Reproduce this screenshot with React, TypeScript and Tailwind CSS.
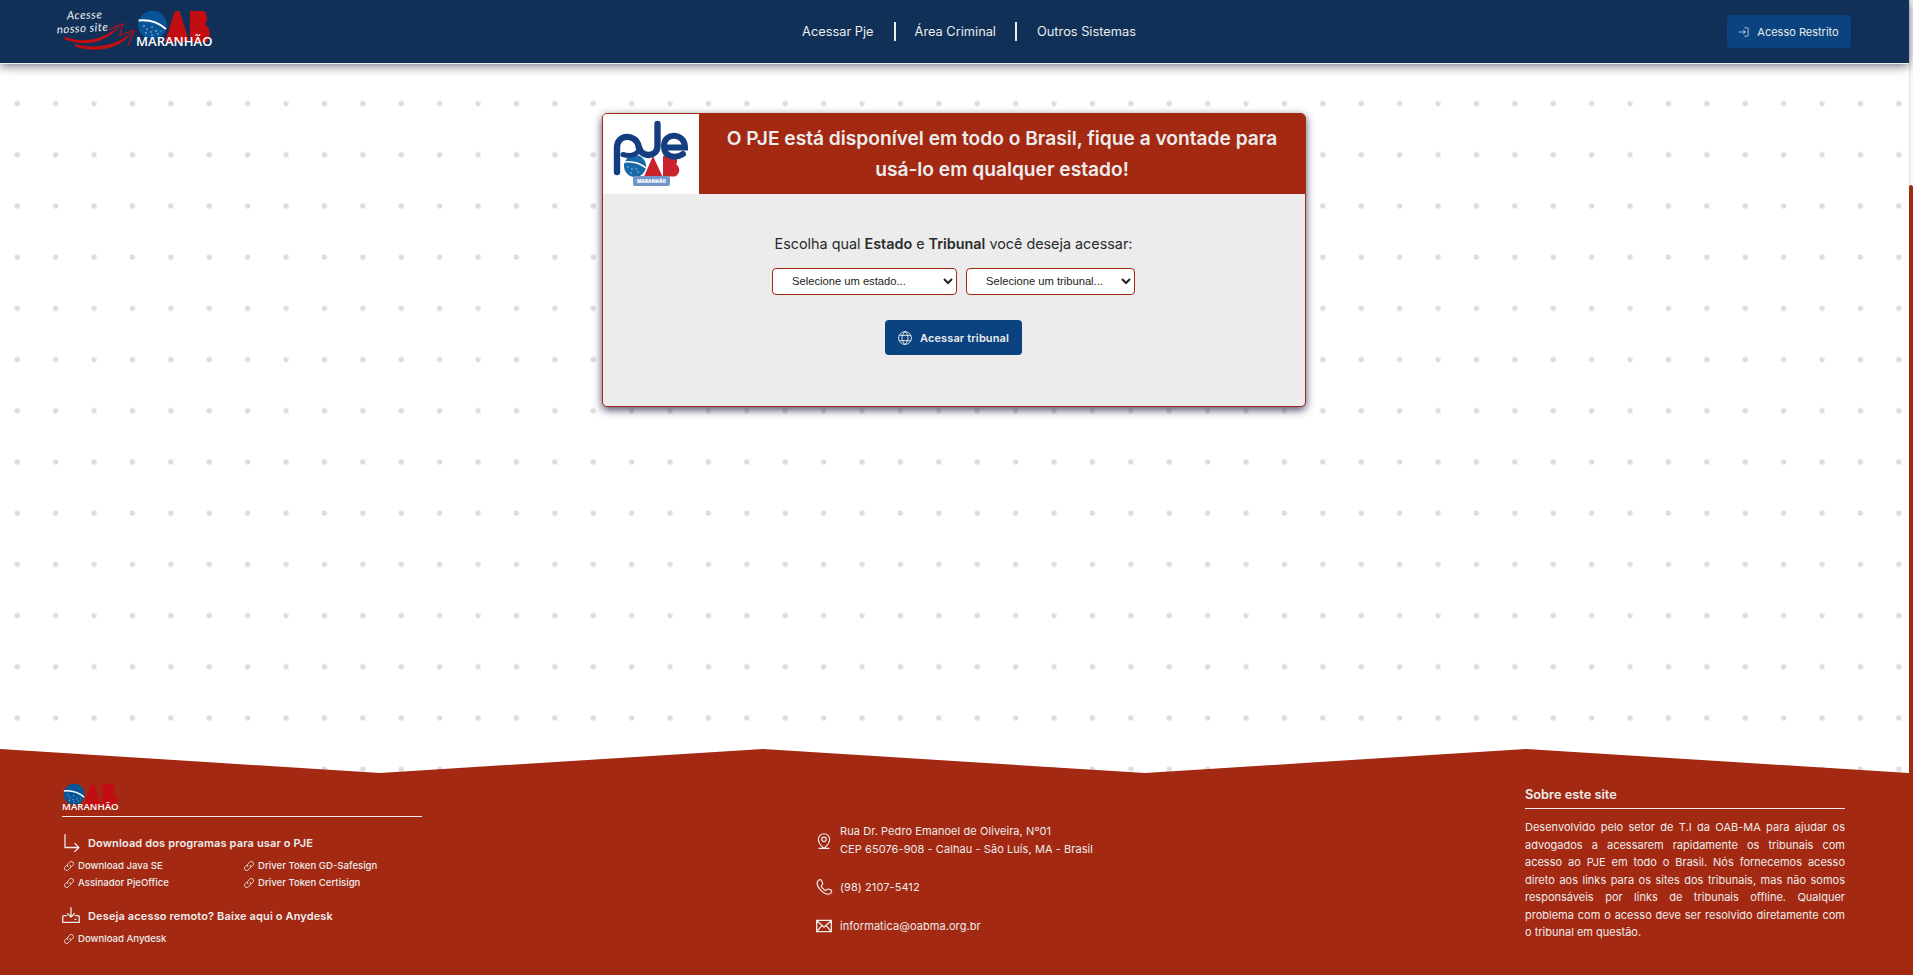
import type { ReactNode } from "react";
import { PiMapPinLine } from "react-icons/pi";

function OabMark() {
  return (
    <>
      <circle cx="14.500" cy="14" r="14.3" fill="#075497" />
      <path d="M.5 9.500C10 8.500 20 11 28 18" fill="none" stroke="#fff" strokeWidth="2" />
      <g fill="#c9d9ea">
        <circle cx="6" cy="15" r=".8" /><circle cx="9" cy="18" r=".7" /><circle cx="14" cy="16" r=".7" />
        <circle cx="8" cy="22" r=".8" /><circle cx="13" cy="21" r=".7" /><circle cx="18" cy="20" r=".8" />
        <circle cx="20" cy="23" r=".7" /><circle cx="14" cy="24" r=".7" /><circle cx="23" cy="20" r=".6" />
      </g>
      <path d="M37 0H41.500L51.500 31H27Z" fill="#c20d12" />
      <path d="M52 0H66C70 4 70 10 67 13C73 18 73 25 69 31H52Z" fill="#c20d12" />
    </>
  );
}

function MaranhaoLogo({ className }: { className: string }) {
  return (
    <svg viewBox="-2 -1 77 38" className={`overflow-visible ${className}`} aria-label="OAB Maranhão">
      <OabMark />
      <text x="-2" y="35" textLength="76.500" lengthAdjust="spacingAndGlyphs" fill="#fff" fontFamily="Open Sans, sans-serif" fontWeight="600" fontSize="12.4">MARANHÃO</text>
    </svg>
  );
}

function SiteCallout() {
  return (
    <svg viewBox="0 0 84 50" className="h-[50px] w-[84px]">
      <g fill="#eee" fontFamily="Lato, sans-serif" fontStyle="italic" fontSize="11.5">
        <text x="11" y="12.500" textLength="35" transform="rotate(-2 11 12.500)">Acesse</text>
        <text x="1" y="26.500" textLength="51" transform="rotate(-3 1 26.500)">nosso site</text>
      </g>
      <g fill="none" stroke="#c20d12" strokeLinecap="round" strokeLinejoin="round">
        <path d="M53 22.500 67 16.500 63.500 29" strokeWidth="1.1" />
        <path d="M64 28.500 78.500 23 72 38.500" strokeWidth="1.1" />
      </g>
      <g fill="#c20d12">
        <path d="M8 29.500C27 37 48 33 66 17C50 37 28 40 9 32.500Z" />
        <path d="M18.500 37C40 43 62 38 78 23.500C64 43 41 46 20 40Z" />
      </g>
    </svg>
  );
}

function PjeLogo() {
  return (
    <svg viewBox="0 0 96 80" className="h-20 w-24 shrink-0 bg-white" aria-label="PJe OAB Maranhão">
      <circle cx="32" cy="52" r="11" fill="#1768a8" />
      <path d="M21 48C30 47 37 49 43 54" fill="none" stroke="#fff" strokeWidth="1.6" />
      <g fill="#c9d9ea">
        <circle cx="25" cy="53" r=".7" /><circle cx="29" cy="55" r=".7" /><circle cx="33" cy="55" r=".7" />
        <circle cx="28" cy="59" r=".7" /><circle cx="35" cy="58" r=".7" />
      </g>
      <path d="M50 42 59.500 62.500H41Z" fill="#cb232b" />
      <path d="M60 42H69C75 44 75 48 73 50C78 54 77 60 72 62.500H60Z" fill="#cb232b" />
      <g fill="none" stroke="#153e80" strokeWidth="6.400" strokeLinecap="round">
        <path d="M14 58V34C14 19.500 33 19.500 35.500 32C38 45 54.500 43 54.500 32V10" />
        <path d="M20 40.500C28 43 34 40 37 35" strokeWidth="5" />
        <path d="M63 33.500H82C82 18.500 61 17.500 61 32C61 44 73 44.500 80 40" strokeWidth="6" />
      </g>
      <rect x="30" y="62" width="37" height="10" rx="2" fill="#7295c9" />
      <text x="34" y="69" textLength="29" lengthAdjust="spacingAndGlyphs" fill="#fff" fontFamily="Open Sans, sans-serif" fontSize="5" fontWeight="800">MARANHÃO</text>
    </svg>
  );
}

function Stroke({ d, className, width = 1.5 }: { d: string; className: string; width?: number }) {
  return (
    <svg viewBox="0 0 24 24" fill="none" stroke="currentColor" strokeWidth={width} strokeLinecap="round" strokeLinejoin="round" className={`shrink-0 overflow-visible ${className}`}>
      <path d={d} />
    </svg>
  );
}

const LOGIN = "M1 12h14M10.500 7.500l4.500 4.500-4.500 4.500M14 2h6a2 2 0 0 1 2 2v16a2 2 0 0 1-2 2h-6";
const GLOBE = "M12 1a11 11 0 1 0 0 22 11 11 0 0 0 0-22ZM12 1c-7 6-7 16 0 22M12 1c7 6 7 16 0 22M3 7.500h18M3 16.500h18";
const LINK = "M9.500 14C6.500 11 8 8.500 10 6.500L13.500 3C16 .5 19 .5 21.200 2.800S23.500 8 21 10.500L18 13.500M14.500 10C17.500 13 16 15.500 14 17.500L10.500 21C8 23.500 5 23.500 2.800 21.200S.5 16 3 13.500L6 10.500";
const TURN = "M4 1v17h18M17 12.500l5.500 5.500-5.500 5.500";
const DRIVE = "M12 1v12M7.500 9l4.500 4.500L16.500 9M6 11.500H2.500a1.500 1.500 0 0 0-1.500 1.500v7.500h22V13a1.500 1.500 0 0 0-1.500-1.500H18M17.500 16.500h1";
const PHONE = "M3.500 2C0 5 1 9 6 15.500S17 23.500 20 22.500c2-.5 4-3 3.500-4.500-.5-1.500-4-3-5.500-3-1.500 0-2 2-3.500 2-2 0-6.500-4.500-6.500-6.500 0-1.500 2-1.500 2-3.500S8 1 6.500 1c-1 0-2 .2-3 1Z";
const MAIL = "M1 3.500h22v17H1ZM1 4l11 9.500L23 4M1 20.500l8-9.500M23 20.500l-8-9.500";

function Heading({ icon, children }: { icon: string; children: ReactNode }) {
  return (
    <h3 className="flex h-[18px] items-center gap-2 text-[11px] font-semibold leading-[18px] tracking-[0.13px]">
      <Stroke d={icon} className="h-[18px] w-[18px]" width={1.7} />
      {children}
    </h3>
  );
}

function DownloadLink({ children }: { children: ReactNode }) {
  return (
    <a href="#" className="flex h-[17px] w-[180px] items-center gap-1 pl-[2px] text-[9.600px] font-medium leading-[17px]">
      <Stroke d={LINK} className="h-[10px] w-[10px]" width={2.200} />
      {children}
    </a>
  );
}

function Dots() {
  return (
    <svg className="absolute inset-0 -z-10 h-full w-full">
      <defs>
        <pattern id="dots" x="-2" y="78" width="38.4" height="51.2" patternUnits="userSpaceOnUse">
          <circle cx="19.200" cy="25.600" r="2.700" fill="#ddd" />
        </pattern>
      </defs>
      <rect y="78" width="100%" height="100%" fill="url(#dots)" />
    </svg>
  );
}

const selectBox = "h-[27px] rounded-[4px] border border-[#a32912] bg-white pb-px pl-[15px] font-['Liberation_Sans',sans-serif] text-[11.2px] text-[#222]";

export default function App() {
  return (
    <div className="flex h-[975px] w-full overflow-hidden bg-white font-['Inter',sans-serif] text-[#ececec]">
      <div className="relative isolate flex min-w-0 flex-1 flex-col">
        <Dots />
        <header className="flex h-[64px] shrink-0 items-center justify-between border-b border-[#ececec] bg-[#103058] pl-14 pr-[58px] shadow-[0_2px_10px_#332b4aaa]">
          <div className="flex w-[370px] items-center">
            <SiteCallout />
            <MaranhaoLogo className="-ml-[4px] -mt-[5px] h-[38px] w-[77px]" />
          </div>
          <nav className="ml-[31px] flex items-center text-[12.800px] leading-[19px]">
            <a href="#" className="px-5">Acessar Pje</a>
            <a href="#" className="border-x-2 border-[#ececec] px-[19px]">Área Criminal</a>
            <a href="#" className="px-5">Outros Sistemas</a>
          </nav>
          <div className="flex w-[370px] justify-end">
            <button className="flex h-[33px] w-[124px] items-center justify-center gap-2 rounded-[4px] bg-[#0a437f] text-[11px]">
              <Stroke d={LOGIN} className="h-[10px] w-[10px]" width={1.800} />
              <span className="pt-px">Acesso Restrito</span>
            </button>
          </div>
        </header>

        <main className="flex flex-1 flex-col items-center pr-px pt-[49px]">
          <section className="h-[294px] w-[704px] overflow-hidden rounded-[5px] border border-[#a32912] bg-[#ececec] text-[#2b2b2b] shadow-[0_3px_8px_#1e1a46cc]">
            <div className="flex h-20 bg-[#a32912]">
              <PjeLogo />
              <h1 className="flex-1 px-5 pt-[9px] text-center text-[19.200px] font-semibold leading-[31px] tracking-[-0.02px] text-[#ececec]">
                O PJE está disponível em todo o Brasil, fique a vontade para usá-lo em qualquer estado!
              </h1>
            </div>
            <div className="flex flex-col items-center pr-px pt-[38px]">
              <p className="text-[14.400px] leading-6 tracking-[-0.02px]">
                Escolha qual <b className="font-semibold">Estado</b> e <b className="font-semibold">Tribunal</b> você deseja acessar:
              </p>
              <div className="mt-[12px] flex gap-[9px]">
                <select className={`${selectBox} w-[185px]`}><option>Selecione um estado...</option></select>
                <select className={`${selectBox} w-[169px]`}><option>Selecione um tribunal...</option></select>
              </div>
              <button className="mt-[25px] flex h-[35px] w-[137px] items-center justify-center gap-2 rounded-[4px] bg-[#0a437f] text-[11px] font-semibold tracking-[0.13px] text-[#ececec]">
                <Stroke d={GLOBE} className="h-[14px] w-[14px]" width={1.600} />
                <span className="pt-px">Acessar tribunal</span>
              </button>
            </div>
          </section>
        </main>

        <footer className="flex h-[226px] shrink-0 justify-between bg-[#a32912] pl-[62px] pr-16 [clip-path:polygon(0_0,380px_24px,763px_0,1145px_24px,1526px_0,100%_24px,100%_100%,0_100%)]">
          <div className="w-[360px] pt-[34px]">
            <div className="h-[34px] border-b border-[#ececec]">
              <MaranhaoLogo className="h-[28.500px] w-[57px]" />
            </div>
            <div className="mt-[17px]">
              <Heading icon={TURN}>Download dos programas para usar o PJE</Heading>
              <div className="mt-[5px] flex flex-wrap">
                <DownloadLink>Download Java SE</DownloadLink>
                <DownloadLink>Driver Token GD-Safesign</DownloadLink>
                <DownloadLink>Assinador PjeOffice</DownloadLink>
                <DownloadLink>Driver Token Certisign</DownloadLink>
              </div>
            </div>
            <div className="mt-[16px]">
              <Heading icon={DRIVE}>Deseja acesso remoto? Baixe aqui o Anydesk</Heading>
              <div className="mt-[5px]"><DownloadLink>Download Anydesk</DownloadLink></div>
            </div>
          </div>
          <address className="ml-[23px] w-[340px] pt-[73px] text-[11px] not-italic leading-[18px] tracking-[0.07px]">
            <p className="flex items-center gap-[7px]">
              <PiMapPinLine className="mt-px h-5 w-[18px]" />
              <span>Rua Dr. Pedro Emanoel de Oliveira, Nº01<br />CEP 65076-908 - Calhau - São Luís, MA - Brasil</span>
            </p>
            <p className="mt-5 flex items-center gap-2 pl-px"><Stroke d={PHONE} className="h-4 w-4" width={1.800} />(98) 2107-5412</p>
            <p className="mt-[21px] flex items-center gap-2 pl-px"><Stroke d={MAIL} className="h-4 w-4" width={2} />informatica@oabma.org.br</p>
          </address>
          <div className="w-[320px] pt-[35px]">
            <h2 className="h-[25px] border-b border-[#ececec] pt-px text-[12.800px] font-semibold leading-[20px]">Sobre este site</h2>
            <p className="mt-[10px] text-justify text-[11px] leading-[17.500px]">
              Desenvolvido pelo setor de T.I da OAB-MA para ajudar os advogados a acessarem rapidamente os tribunais com acesso ao PJE em todo o Brasil. Nós fornecemos acesso direto aos links para os sites dos tribunais, mas não somos responsáveis por links de tribunais offline. Qualquer problema com o acesso deve ser resolvido diretamente com o tribunal em questão.
            </p>
          </div>
        </footer>
      </div>
      <div className="w-1 shrink-0 bg-[#fafafa] pt-[185px] shadow-[inset_1px_0_2px_#ddd]">
        <div className="h-full rounded-t-[3px] bg-[#a32912]" />
      </div>
    </div>
  );
}
